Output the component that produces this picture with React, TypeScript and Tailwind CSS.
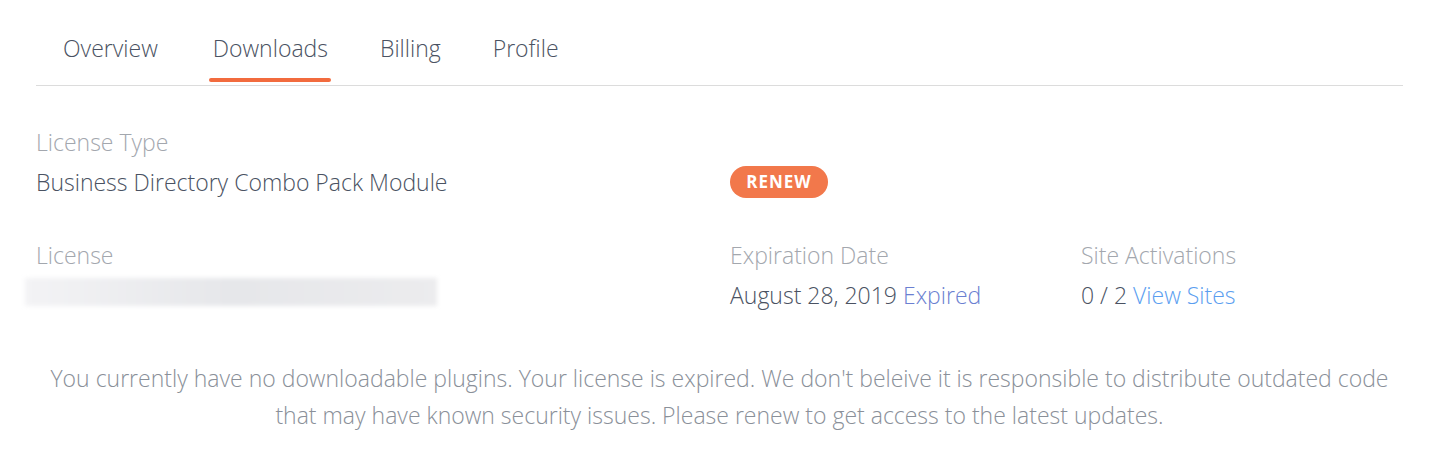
import React from "react";

export default function App() {
  const tabs = ["Overview", "Downloads", "Billing", "Profile"];
  return (
    <div
      className="w-[1433px] h-[450px] bg-white overflow-hidden"
      style={{ fontFamily: '"Open Sans", "Liberation Sans", sans-serif' }}
    >
      <div className="ml-[36px] mr-[30px] pt-[30px]">
        <div className="flex border-b border-[#dcdcdc] pl-[27px]">
          {tabs.map((t, i) => (
            <div key={t} className={`relative pb-[19px] ${i === 0 ? "mr-[55px]" : "mr-[52px]"}`}>
              <span className="text-[23px] font-light leading-[36px] text-[#4a5262]">{t}</span>
              {i === 1 && (
                <div className="absolute left-[-4px] right-[-3px] bottom-[3px] h-[4px] rounded-full bg-[#f26b3e]" />
              )}
            </div>
          ))}
        </div>

        <div className="grid grid-cols-[694px_351px_1fr] pt-[36px] font-light text-[23px]">
          <div className="flex flex-col">
            <span className="text-[#a3a7ae] leading-[40px]">License Type</span>
            <span className="text-[#4a5262] leading-[40px]">Business Directory Combo Pack Module</span>
          </div>
          <div className="flex items-end pb-[4px]">
            <span className="inline-flex items-center justify-center h-[32px] w-[98px] rounded-full bg-[#f2784b] text-white font-bold text-[17px] tracking-[1px]">
              RENEW
            </span>
          </div>
          <div />

          <div className="flex flex-col pt-[33px]">
            <span className="text-[#a3a7ae] leading-[40px]">License</span>
            <div className="ml-[-11px] mt-[3px] h-[28px] w-[412px] bg-gradient-to-r from-[#f3f3f5] via-[#e6e7ea] to-[#ececee] blur-[2px]" />
          </div>
          <div className="flex flex-col pt-[33px]">
            <span className="text-[#a3a7ae] leading-[40px]">Expiration Date</span>
            <span className="text-[#4a5262] leading-[40px]">
              August 28, 2019 <span className="text-[#6b7fd1]">Expired</span>
            </span>
          </div>
          <div className="flex flex-col pt-[33px]">
            <span className="text-[#a3a7ae] leading-[40px]">Site Activations</span>
            <span className="text-[#4a5262] leading-[40px]">
              0 / 2 <span className="text-[#5b9ef0]">View Sites</span>
            </span>
          </div>
        </div>

        <p className="mt-[45px] text-center font-light text-[23px] leading-[37px] text-[#8a9099] whitespace-nowrap">
          You currently have no downloadable plugins. Your license is expired. We don't beleive it is responsible to distribute outdated code
          <br />
          that may have known security issues. Please renew to get access to the latest updates.
        </p>
      </div>
    </div>
  );
}
